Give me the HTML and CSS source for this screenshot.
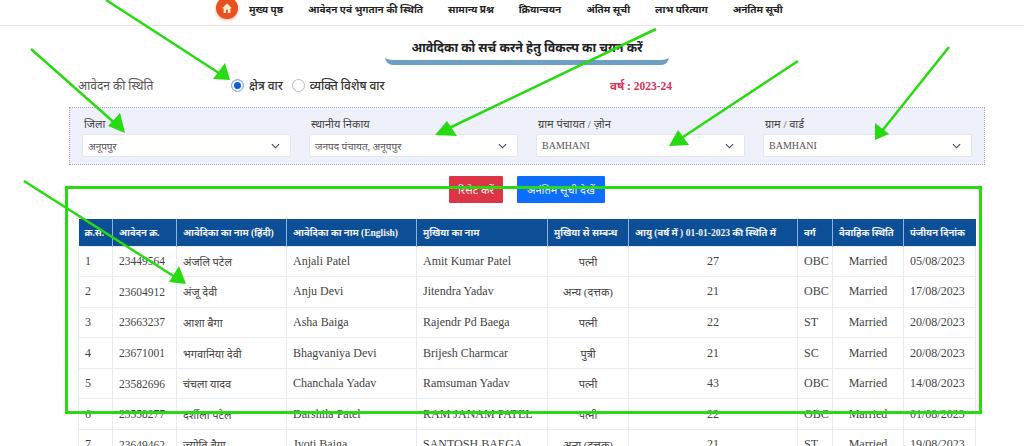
FILE: index.html
```html
<!DOCTYPE html>
<html lang="hi">
<head>
<meta charset="utf-8">
<title>आवेदिका सर्च</title>
<link rel="stylesheet" href="styles.css">
</head>
<body>
<div class="page">
  <nav class="nav">
    <span class="home"><svg viewBox="0 0 12 12" width="12" height="12"><path d="M6 1.5 1 6.2h1.6V11h2.5V7.8h1.8V11h2.5V6.2H11z" fill="#ffe9c9"/></svg></span>
    <a class="first">मुख्य पृष्ठ</a>
    <a>आवेदन एवं भुगतान की स्थिति</a>
    <a>सामान्य प्रश्न</a>
    <a>क्रियान्वयन</a>
    <a>अंतिम सूची</a>
    <a>लाभ परित्याग</a>
    <a>अनंतिम सूची</a>
  </nav>

  <div class="title-wrap"><h1 class="title">आवेदिका को सर्च करने हेतु विकल्प का चयन करें</h1></div>

  <div class="status">
    <span class="status-label">आवेदन की स्थिति</span>
    <span class="radios">
      <span class="radio on"></span><span class="radio-text">क्षेत्र वार</span>
      <span class="radio"></span><span class="radio-text">व्यक्ति विशेष वार</span>
    </span>
    <span class="year">वर्ष : 2023-24</span>
  </div>

  <section class="filters">
    <div class="field"><label>जिला</label><div class="select">अनूपपुर<svg class="chev" viewBox="0 0 10 6"><path d="M1 1l4 4 4-4"/></svg></div></div>
    <div class="field"><label>स्थानीय निकाय</label><div class="select">जनपद पंचायत, अनूपपुर<svg class="chev" viewBox="0 0 10 6"><path d="M1 1l4 4 4-4"/></svg></div></div>
    <div class="field"><label>ग्राम पंचायत / ज़ोन</label><div class="select">BAMHANI<svg class="chev" viewBox="0 0 10 6"><path d="M1 1l4 4 4-4"/></svg></div></div>
    <div class="field"><label>ग्राम / वार्ड</label><div class="select">BAMHANI<svg class="chev" viewBox="0 0 10 6"><path d="M1 1l4 4 4-4"/></svg></div></div>
  </section>

  <div class="actions">
    <button class="btn red">रिसेट करें</button>
    <button class="btn blue">अनंतिम सूची देखें</button>
  </div>

  <table class="grid">
    <colgroup>
      <col class="c1"><col class="c2"><col class="c3"><col class="c4"><col class="c5"><col class="c6"><col class="c7"><col class="c8"><col class="c9"><col class="c10">
    </colgroup>
    <thead>
      <tr><th>क्र.स.</th><th>आवेदन क्र.</th><th>आवेदिका का नाम (हिंदी)</th><th>आवेदिका का नाम (English)</th><th>मुखिया का नाम</th><th>मुखिया से सम्बन्ध</th><th>आयु (वर्ष में ) 01-01-2023 की स्थिति में</th><th>वर्ग</th><th>वैवाहिक स्थिति</th><th>पंजीयन दिनांक</th></tr>
    </thead>
    <tbody>
      <tr><td>1</td><td class="num">23449564</td><td class="hi">अंजलि पटेल</td><td>Anjali Patel</td><td>Amit Kumar Patel</td><td class="m hi">पत्नी</td><td class="m">27</td><td>OBC</td><td class="m">Married</td><td>05/08/2023</td></tr>
      <tr><td>2</td><td class="num">23604912</td><td class="hi">अंजू देवी</td><td>Anju Devi</td><td>Jitendra Yadav</td><td class="m hi">अन्य (दत्तक)</td><td class="m">21</td><td>OBC</td><td class="m">Married</td><td>17/08/2023</td></tr>
      <tr><td>3</td><td class="num">23663237</td><td class="hi">आशा बैगा</td><td>Asha Baiga</td><td>Rajendr Pd Baega</td><td class="m hi">पत्नी</td><td class="m">22</td><td>ST</td><td class="m">Married</td><td>20/08/2023</td></tr>
      <tr><td>4</td><td class="num">23671001</td><td class="hi">भगवानिया देवी</td><td>Bhagvaniya Devi</td><td>Brijesh Charmcar</td><td class="m hi">पुत्री</td><td class="m">21</td><td>SC</td><td class="m">Married</td><td>20/08/2023</td></tr>
      <tr><td>5</td><td class="num">23582696</td><td class="hi">चंचला यादव</td><td>Chanchala Yadav</td><td>Ramsuman Yadav</td><td class="m hi">पत्नी</td><td class="m">43</td><td>OBC</td><td class="m">Married</td><td>14/08/2023</td></tr>
      <tr><td>6</td><td class="num">23558277</td><td class="hi">दर्शीला पटेल</td><td>Darshila Patel</td><td>RAM JANAM PATEL</td><td class="m hi">पत्नी</td><td class="m">22</td><td>OBC</td><td class="m">Married</td><td>01/08/2023</td></tr>
      <tr><td>7</td><td class="num">23649462</td><td class="hi">ज्योति बैगा</td><td>Jyoti Baiga</td><td>SANTOSH BAEGA</td><td class="m hi">अन्य (दत्तक)</td><td class="m">21</td><td>ST</td><td class="m">Married</td><td>19/08/2023</td></tr>
    </tbody>
  </table>

  <svg class="marks" viewBox="0 0 1024 446" width="1024" height="446">
    <rect x="66.5" y="187.5" width="914" height="225" />
    <g class="line">
      <path d="M106 0 222 75"/>
      <path d="M31 49 118 126"/>
      <path d="M656 29 445 130"/>
      <path d="M798 61 680 139"/>
      <path d="M949 47 882 131"/>
      <path d="M24 181 175 277"/>
    </g>
    <g class="head">
      <path d="M230 80 213 79 225 63z"/>
      <path d="M125 133 108 126 120 113z"/>
      <path d="M435 135 447 121 457 136z"/>
      <path d="M669 146 678 130 689 145z"/>
      <path d="M875 140 875 123 889 134z"/>
      <path d="M186 284 169 282 179 266z"/>
    </g>
  </svg>
</div>
</body>
</html>
```

FILE: styles.css
```css
* { box-sizing: border-box; }
html, body { margin: 0; padding: 0; background: #fff; }
body { font-family: "Liberation Serif", "Noto Sans", "Noto Serif Devanagari", serif; color: #333; }
.page { position: relative; width: 1024px; height: 446px; overflow: hidden; }

.nav { height: 26px; border-bottom: 1px solid #e6e6e6; display: flex; align-items: center; padding-left: 216px; gap: 25px; font-size: 10px; font-weight: 700; color: #222; white-space: nowrap; padding-bottom: 7px; }
.home { width: 22px; height: 22px; border-radius: 50%; background: #e8501f; display: flex; align-items: center; justify-content: center; margin-right: -14px; margin-top: -2px; box-shadow: 0 1px 3px rgba(200,80,30,.5); flex: none; }

.title-wrap { margin-top: 12px; padding-left: 385px; }
.title { margin: 0; width: 284px; height: 27px; font-size: 12.5px; font-weight: 700; line-height: 20px; text-align: center; color: #222; border-bottom: 5px solid #6b9fc4; border-radius: 0 0 8px 8px; }

.status { display: flex; align-items: center; height: 20px; margin-top: 10px; padding-left: 78px; font-size: 12px; }
.status-label { width: 153px; color: #555; }
.radios { display: flex; align-items: center; width: 379px; font-weight: 500; color: #333; }
.radio { width: 13px; height: 13px; border-radius: 50%; border: 1px solid #bbb; background: #fff; flex: none; }
.radio.on { border: 1px solid #8fb4ea; background: #0d5fd6; box-shadow: inset 0 0 0 2px #fff; }
.radio-text { margin: 0 9px 0 5px; }
.year { font-weight: 700; font-size: 11.5px; color: #d4335c; }

.filters { margin: 12px 0 0 69px; width: 916px; height: 58px; padding: 8px 12px 0; border: 1px dotted #aab; background: #eef0fa; display: grid; grid-template-columns: repeat(4, 1fr); gap: 18px; }
.field label { display: block; height: 19px; padding-left: 2px; font-size: 11px; line-height: 17px; color: #444; }
.select { height: 23px; margin-top: -1px; background: #fff; border: 1px solid #e4e6ef; border-radius: 2px; padding: 0 10px 0 5px; display: flex; align-items: center; justify-content: space-between; font-size: 10px; color: #555; white-space: nowrap; }
.chev { width: 9px; height: 6px; fill: none; stroke: #444; stroke-width: 1.2; }

.actions { display: flex; margin: 11px 0 0 449px; gap: 14px; height: 27px; }
.btn { border: 0; border-radius: 1px; height: 27px; padding: 0; font: inherit; font-size: 11px; color: #eee; }
.red { width: 54px; background: #dc3545; }
.blue { width: 88px; background: #0d6efd; }

.grid { margin: 16px 0 0 78px; width: 897px; table-layout: fixed; border-collapse: collapse; font-size: 12px; color: #444; }
.c1 { width: 34px; } .c2 { width: 64px; } .c3 { width: 110px; } .c4 { width: 130px; } .c5 { width: 131px; }
.c6 { width: 81px; } .c7 { width: 169px; } .c8 { width: 35px; } .c9 { width: 71px; } .c10 { width: 72px; }
.grid th { height: 27px; background: #0d4f96; color: #f1f4f8; font-size: 9.5px; font-weight: 700; text-align: left; padding: 0 6px; border-right: 1px solid #8db4dd; white-space: nowrap; overflow: hidden; }
.grid th:last-child { border-right: 0; }
.grid td { height: 30.6px; padding: 0 6px; border: 1px solid #e9ebef; white-space: nowrap; overflow: hidden; }
.grid td.m { text-align: center; }
.grid td.hi { font-size: 11px; }
.grid td.num { font-size: 11.5px; }

.marks { position: absolute; left: 0; top: 0; pointer-events: none; }
.marks rect { fill: none; stroke: #28da12; stroke-width: 3; }
.marks .line path { fill: none; stroke: #28da12; stroke-width: 2.5; }
.marks .head path { fill: #28da12; }
```
